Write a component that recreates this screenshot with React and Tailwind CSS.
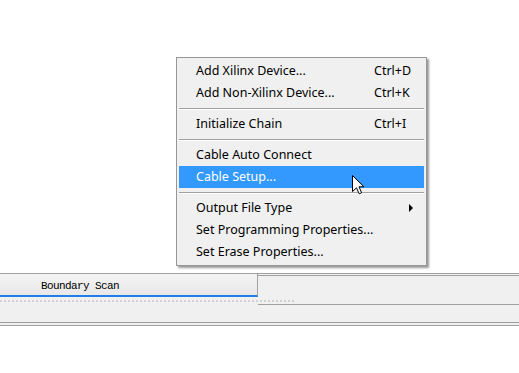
import React from "react";

const Item = ({ label, shortcut, active, arrow }) => (
  <div
    className={`relative flex items-center h-[22px] pl-[17px] ${active ? "bg-[#3399ff] text-white" : "text-black"}`}
  >
    <span className="flex-1 whitespace-nowrap">{label}</span>
    <span className="w-[50px] whitespace-nowrap">{shortcut}</span>
    {arrow && (
      <svg className="absolute left-[230px] top-[7px]" width="5" height="8" viewBox="0 0 5 8">
        <path d="M0 0 L4 4 L0 8 Z" fill="#000" />
      </svg>
    )}
  </div>
);

const Sep = () => (
  <div className="h-[9px] flex flex-col justify-center">
    <div className="h-px bg-[#a0a0a0]" />
    <div className="h-px bg-white" />
  </div>
);

export default function App() {
  return (
    <div className="relative w-[519px] h-[373px] bg-white overflow-hidden font-['Noto_Sans',sans-serif]">
      <div className="h-[273px]" />
      <div className="border-t border-[#a0a0a0] bg-[#f0f0f0]">
        <div className="flex h-[23px]">
          <div className="w-[258px] border-r border-[#a0a0a0] border-b-2 border-b-[#1f7fe6] bg-gradient-to-b from-[#f4f4f4] to-[#e8e8e8] flex items-center pl-[41px] pt-[4px] font-['Liberation_Mono',monospace] text-[11px] tracking-[-0.6px] text-black">
            Boundary Scan
          </div>
          <div className="flex-1 mt-px border-t border-[#a0a0a0]" />
        </div>
        <div className="h-[7px] flex items-center">
          <div className="w-[296px] h-[2px] bg-[repeating-linear-gradient(90deg,#d0d0d0_0_2px,transparent_2px_4px)]" />
        </div>
        <div className="ml-[258px] h-px bg-[#a0a0a0]" />
        <div className="h-[17px]" />
        <div className="h-px bg-[#a0a0a0]" />
        <div className="h-[2px]" />
        <div className="h-px bg-[#a0a0a0]" />
      </div>

      <div className="absolute left-[176px] top-[57px] w-[251px] border border-[#979797] bg-[#f0f0f0] p-[2px] text-[12.5px] shadow-[2px_2px_2px_rgba(0,0,0,0.4)]">
        <Item label="Add Xilinx Device..." shortcut="Ctrl+D" />
        <Item label="Add Non-Xilinx Device..." shortcut="Ctrl+K" />
        <Sep />
        <Item label="Initialize Chain" shortcut="Ctrl+I" />
        <Sep />
        <Item label="Cable Auto Connect" />
        <Item label="Cable Setup..." active />
        <Sep />
        <Item label="Output File Type" arrow />
        <Item label="Set Programming Properties..." />
        <Item label="Set Erase Properties..." />
      </div>

      <svg className="absolute left-[352px] top-[175px]" width="13" height="20" viewBox="0 0 13 20">
        <path
          d="M0.5 0.5 L0.5 16.5 L4.5 12.8 L7.2 18.8 L9.6 17.8 L7 11.8 L12 11.8 Z"
          fill="#fff"
          stroke="#000"
          strokeWidth="1"
          strokeLinejoin="miter"
        />
      </svg>
    </div>
  );
}
